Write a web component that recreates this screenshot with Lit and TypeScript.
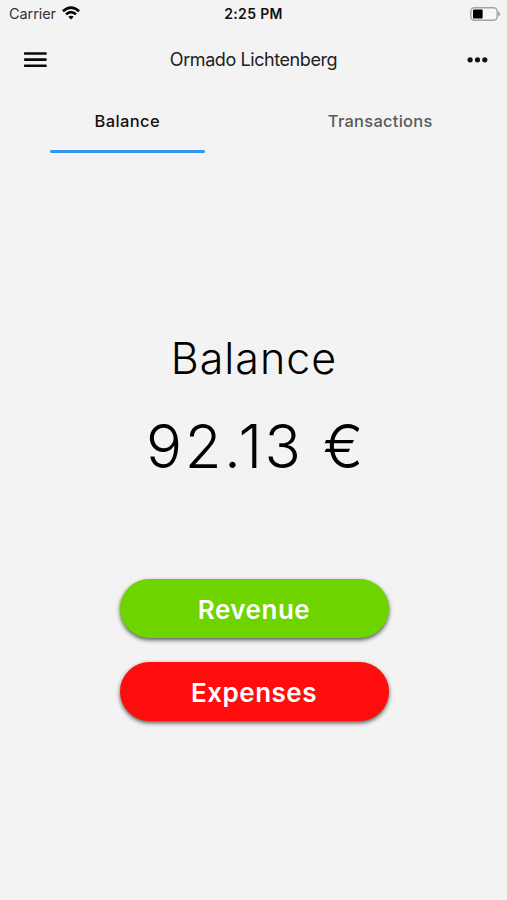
import { LitElement, html, css } from "lit";
import { customElement } from "lit/decorators.js";

@customElement("app-root")
export class AppRoot extends LitElement {
  static styles = css`
    :host {
      display: flex;
      flex-direction: column;
      height: 100vh;
      overflow: hidden;
      background: #f3f3f3;
      color: #111;
      font-family: Inter, "Liberation Sans", sans-serif;
      white-space: nowrap;
    }
    .status, .header {
      display: grid;
      grid-template-columns: 1fr auto 1fr;
      align-items: center;
    }
    .status { height: 27px; }
    .carrier { display: flex; align-items: center; gap: 6px; padding-left: 9px; font-size: 14.5px; color: #333; letter-spacing: -0.08px; }
    .carrier svg { margin-bottom: 1px; }
    .time { font-size: 14px; font-weight: 600; letter-spacing: 0.35px; }
    .battery { justify-self: end; margin-right: 6px; }
    .header { height: 65px; }
    .menu { margin-left: 24px; }
    .title { font-size: 18px; letter-spacing: -0.42px; color: #222; }
    .more { justify-self: end; margin-right: 19px; }
    svg { display: block; }
    .tabs { display: grid; grid-template-columns: 1fr 1fr; height: 61px; }
    .tab {
      display: flex;
      flex-direction: column;
      align-items: center;
      justify-content: space-between;
      font-size: 16.5px;
      line-height: 21px;
      font-weight: 500;
      letter-spacing: 0.25px;
      color: #5a5a5a;
      padding-top: 19px;
    }
    .active { color: #111; letter-spacing: 0.4px; padding-left: 1px; }
    .bar { width: 155px; height: 3px; border-radius: 2px; background: #3095ec; }
    .summary { display: flex; flex-direction: column; align-items: center; padding-top: 174px; color: #000; font-weight: 300; }
    .label { font-size: 43px; line-height: 62px; letter-spacing: 1px; padding-left: 1px; }
    .amount { font-size: 60px; line-height: 80px; letter-spacing: 2.6px; margin-top: 17px; padding-left: 5px; }
    .actions { display: flex; flex-direction: column; align-items: center; gap: 24px; padding: 93px 0 0 1px; }
    button {
      width: 269px;
      height: 59px;
      border: 0;
      padding: 1px 0 0;
      border-radius: 30px;
      color: #fff;
      font: 600 26px Inter, sans-serif;
      letter-spacing: 0.5px;
      box-shadow: 0 2px 4px rgba(0, 0, 0, 0.65);
    }
    .revenue { background: #6dd400; }
    .expenses { background: #ff0d0d; }
  `;

  render() {
    return html`
      <div class="status">
        <div class="carrier">
          <span>Carrier</span>
          <svg width="18" height="14" viewBox="0 0 18 14">
            <g fill="none" stroke="#050505" stroke-width="2.5">
              <path d="M0.9 5.2Q9 -2 17.1 5.2" />
              <path d="M4 8.3Q9 4 14 8.3" />
            </g>
            <path d="M6.3 10.7Q9 8.6 11.7 10.7L9 13.4Z" fill="#050505" />
          </svg>
        </div>
        <div class="time">2:25 PM</div>
        <svg class="battery" width="31" height="14" viewBox="0 0 31 14">
          <rect x="0.8" y="0.8" width="26.4" height="12.4" rx="3.6" fill="#f7f7f7" stroke="#a3a3a3" stroke-width="1.4" />
          <rect x="3" y="2.6" width="9.6" height="8.8" rx="1" fill="#000" />
          <path d="M28.2 4.4Q32.6 7 28.2 9.6Z" fill="#a3a3a3" />
        </svg>
      </div>
      <div class="header">
        <svg class="menu" width="23" height="16" viewBox="0 0 23 16">
          <path d="M1 1.5H21.6M1 7.6H21.6M1 13.7H21.6" stroke="#0a0a0a" stroke-width="2.6" stroke-linecap="round" />
        </svg>
        <div class="title">Ormado Lichtenberg</div>
        <svg class="more" width="21" height="6" viewBox="0 0 21 6">
          <g fill="#111"><circle cx="3.1" cy="2.8" r="2.6" /><circle cx="10.5" cy="2.8" r="2.6" /><circle cx="17.8" cy="2.8" r="2.6" /></g>
        </svg>
      </div>
      <div class="tabs">
        <div class="tab active"><span>Balance</span><div class="bar"></div></div>
        <div class="tab"><span>Transactions</span></div>
      </div>
      <div class="summary">
        <div class="label">Balance</div>
        <div class="amount">92.13 €</div>
      </div>
      <div class="actions">
        <button class="revenue">Revenue</button>
        <button class="expenses">Expenses</button>
      </div>
    `;
  }
}
